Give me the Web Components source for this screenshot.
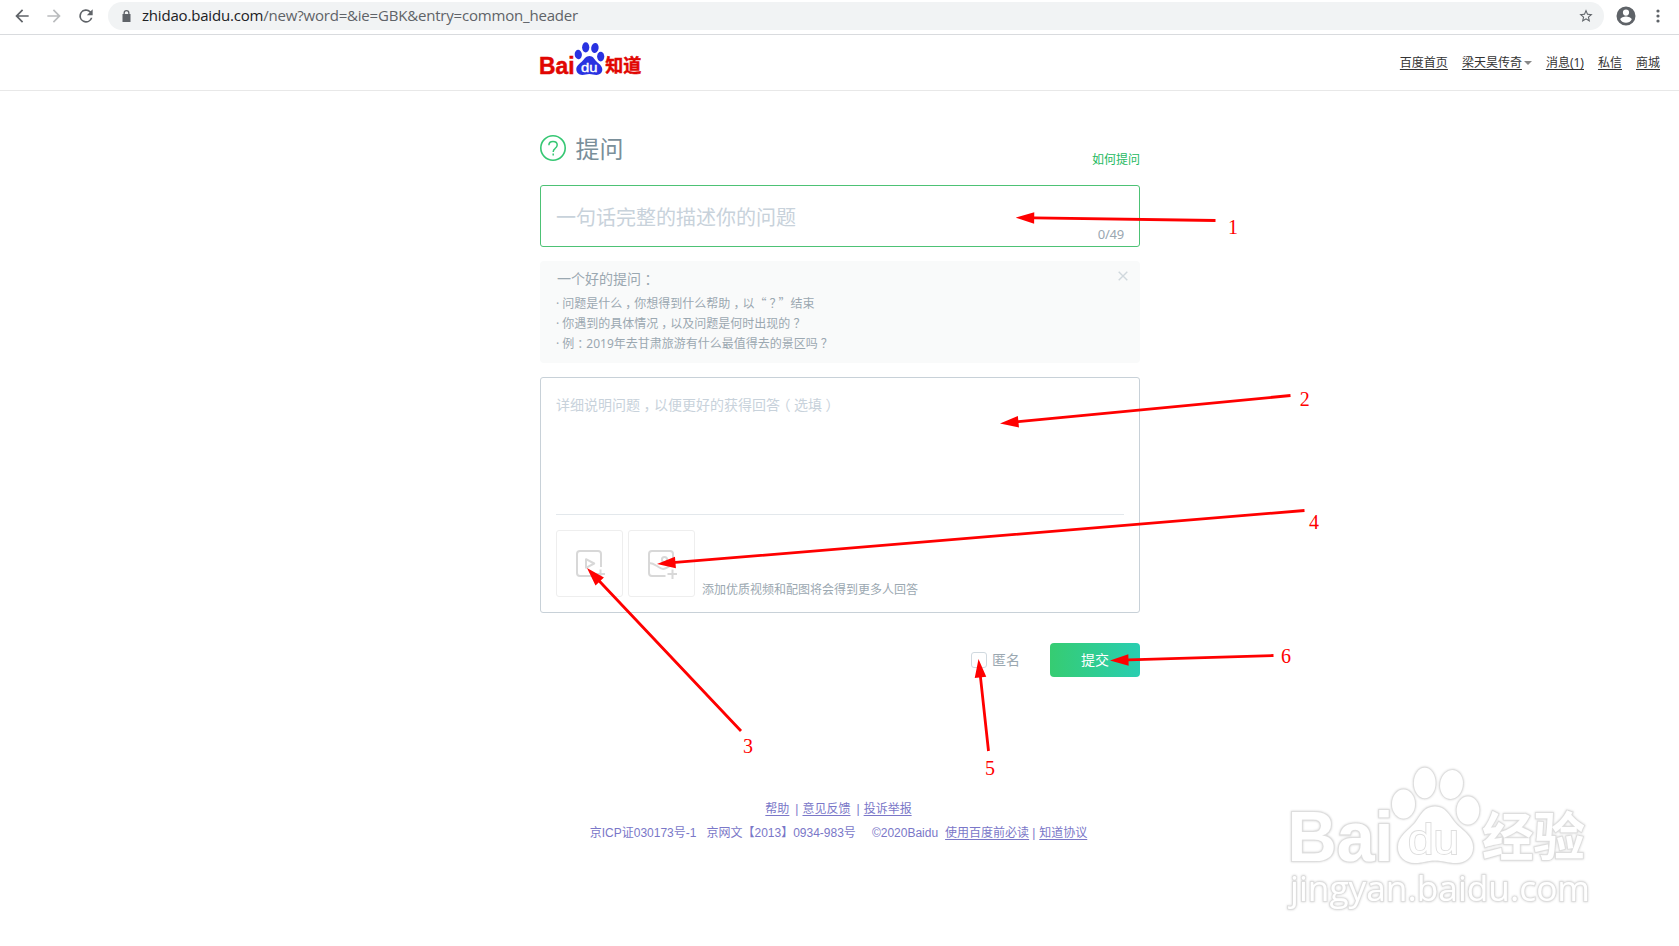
<!DOCTYPE html>
<html lang="zh-CN">
<head>
<meta charset="utf-8">
<title>提问_百度知道</title>
<style>
  html, body {
    margin: 0;
    height: 946px;
    overflow: hidden;
    background: #fff;
  }
  body {
    position: relative;
    font-family: "Noto Sans", "Noto Sans CJK SC", sans-serif;
    font-size: 12px;
    color: #333;
    text-spacing-trim: space-all;
  }
  /* punctuation centred in its full-width cell */
  i {
    margin: 0 .25em;
    font-family: "Noto Sans CJK SC", sans-serif;
    font-style: normal;
    font-feature-settings: "halt";
    line-height: 0;
  }
  q {
    quotes: none;
    font-family: "Noto Sans CJK SC", sans-serif;
    line-height: 0;
  }
</style>
</head>
<body>
<browser-bar host="zhidao.baidu.com" path="/new?word=&amp;ie=GBK&amp;entry=common_header"></browser-bar>
<site-header>
  <nav-link>百度首页</nav-link>
  <nav-link menu>梁天昊传奇</nav-link>
  <nav-link>消息(1)</nav-link>
  <nav-link>私信</nav-link>
  <nav-link>商城</nav-link>
</site-header>
<ask-page>
  <ask-title><span>提问</span><span slot="help">如何提问</span></ask-title>
  <title-input count="0/49">一句话完整的描述你的问题</title-input>
  <tips-panel>
    <span slot="title">一个好的提问<i>：</i></span>
    <div>· 问题是什么<i>，</i>你想得到什么帮助<i>，</i>以<q>“<i>？</i>”</q>结束</div>
    <div>· 你遇到的具体情况<i>，</i>以及问题是何时出现的<i>？</i></div>
    <div>· 例<i>：</i>2019年去甘肃旅游有什么最值得去的景区吗<i>？</i></div>
  </tips-panel>
  <detail-editor>
    <span>详细说明问题<i>，</i>以便更好的获得回答<i>（</i>选填<i>）</i></span>
    <upload-tile slot="tiles" type="video"></upload-tile>
    <upload-tile slot="tiles" type="image"></upload-tile>
    <span slot="hint">添加优质视频和配图将会得到更多人回答</span>
  </detail-editor>
  <submit-row><span slot="anonymous">匿名</span>提交</submit-row>
</ask-page>
<site-footer></site-footer>
<jingyan-watermark></jingyan-watermark>
<arrow-overlay></arrow-overlay>

<script>
class BaseElement extends HTMLElement {
  constructor() {
    super();
    this.attachShadow({ mode: 'open' });
  }

  connectedCallback() {
    this.shadowRoot.innerHTML = this.render();
  }
}

class BrowserBar extends BaseElement {
  render() {
    return `
      <style>
        :host {
          display: flex;
          align-items: center;
          box-sizing: border-box;
          height: 35px;
          padding: 0 11px 3px 12px;
          border-bottom: 1px solid #d9dbde;
        }
        svg { display: block; flex: none; }
        .nav { display: flex; gap: 12px; width: 96px; }
        .url {
          flex: 1;
          display: flex;
          align-items: center;
          box-sizing: border-box;
          height: 28px;
          margin-top: 1px;
          padding: 0 10px 0 12px;
          border-radius: 14px;
          background: #f1f3f4;
          font: 15px/26px "Open Sans", sans-serif;
          color: #5f6368;
        }
        .text { flex: 1; height: 28px; margin-left: 9px; letter-spacing: -0.19px; white-space: nowrap; }
        .host { color: #202124; }
        .tools { display: flex; align-items: center; gap: 10px; margin-left: 10px; }
      </style>
      <div class="nav">
        <svg width="20" height="20" viewBox="0 0 24 24" fill="#5f6368"><path d="M20 11H7.8l5.6-5.6L12 4l-8 8 8 8 1.4-1.4L7.8 13H20z"/></svg>
        <svg width="20" height="20" viewBox="0 0 24 24" fill="#babcbe"><path d="M12 4l-1.4 1.4 5.6 5.6H4v2h12.200l-5.600 5.600L12 20l8-8z"/></svg>
        <svg width="20" height="20" viewBox="0 0 24 24" fill="#5f6368"><path d="M17.650 6.350A8 8 0 1 0 19.730 14h-2.080A6 6 0 1 1 12 6c1.660 0 3.140.690 4.220 1.780L13 11h7V4z"/></svg>
      </div>
      <div class="url">
        <svg width="13" height="14" viewBox="0 0 13 14" fill="#5f6368"><path d="M2.500 5h1V4a3 3 0 0 1 6 0v1h1v8h-8zM4.800 5h3.400V4a1.700 1.700 0 0 0-3.400 0z" fill-rule="evenodd"/></svg>
        <span class="text"><span class="host">${this.getAttribute('host')}</span>${this.getAttribute('path')}</span>
        <svg width="16" height="16" viewBox="0 0 24 24" fill="#5f6368"><path d="M22 9.240l-7.190-.620L12 2 9.190 8.630 2 9.240l5.460 4.730L5.820 21 12 17.270 18.180 21l-1.630-7.030zM12 15.400l-3.760 2.270 1-4.280-3.320-2.880 4.380-.380L12 6.100l1.710 4.040 4.380.380-3.320 2.880 1 4.280z"/></svg>
      </div>
      <div class="tools">
        <svg width="24" height="24" viewBox="0 0 24 24" fill="#5f6368"><path d="M12 2.500a9.500 9.500 0 1 0 0 19 9.500 9.500 0 0 0 0-19zm0 3a3.100 3.100 0 1 1 0 6.200 3.100 3.100 0 0 1 0-6.200zm0 13.300a6.600 6.600 0 0 1-5.700-3.200c0-1.900 3.800-3 5.700-3s5.700 1.100 5.700 3a6.600 6.600 0 0 1-5.700 3.200z"/></svg>
        <svg width="20" height="20" viewBox="0 0 20 20" fill="#5f6368"><circle cx="10" cy="5" r="1.600"/><circle cx="10" cy="10" r="1.600"/><circle cx="10" cy="15" r="1.600"/></svg>
      </div>
    `;
  }
}

class SiteHeader extends BaseElement {
  render() {
    return `
      <style>
        :host {
          display: flex;
          justify-content: flex-end;
          box-sizing: border-box;
          height: 56px;
          border-bottom: 1px solid #e8e8e8;
        }
        .logo { width: 104px; height: 42px; margin: 6px auto 0 539px; }
        nav { display: flex; align-items: center; gap: 14px; padding: 1px 19px 0 0; }
      </style>
      <zhidao-logo class="logo"></zhidao-logo>
      <nav><slot></slot></nav>
    `;
  }
}

class ZhidaoLogo extends BaseElement {
  render() {
    return `
      <style>
        :host { display: block; }
        svg { display: block; }
        .red { fill: #e10602; stroke: #e10602; stroke-width: .5; font-weight: 700; }
      </style>
      <svg width="104" height="42" viewBox="539 41 104 42">
        <text class="red" x="539" y="73.600" font-family="Liberation Sans, sans-serif" font-size="23.500" textLength="35.500" lengthAdjust="spacingAndGlyphs">Bai</text>
        <g fill="#2932e1">
          <ellipse cx="578.300" cy="54.500" rx="3.600" ry="4.700" transform="rotate(-6 578.300 54.500)"/>
          <ellipse cx="585.700" cy="47.300" rx="3.600" ry="5.100"/>
          <ellipse cx="594.900" cy="48" rx="3.700" ry="5" transform="rotate(10 594.900 48)"/>
          <ellipse cx="600.700" cy="56.600" rx="3.600" ry="4.800"/>
          <path d="M589.500 56c3.500 0 4.800 3.200 6.800 5.200 2.400 2.400 6 4.500 6 8.300 0 3.500-2.700 5.400-5.800 5.400-2.700 0-4.500-.800-7.200-.800s-4.300.800-7 .800c-3.500 0-6-2.200-6-5.600 0-3.700 3.800-5.700 6.100-8.200 1.900-2 3.500-5.100 7.100-5.100z"/>
        </g>
        <text x="581" y="71.600" fill="#fff" font-family="Liberation Sans, sans-serif" font-size="13.500" textLength="16.500" lengthAdjust="spacingAndGlyphs" stroke="#fff" stroke-width=".4">du</text>
        <text class="red" x="605.300" y="72.300" font-family="Noto Sans CJK SC, sans-serif" font-size="18" textLength="36" lengthAdjust="spacingAndGlyphs">知道</text>
      </svg>
    `;
  }
}

class NavLink extends BaseElement {
  render() {
    return `
      <style>
        :host { display: flex; align-items: center; font-size: 12px; line-height: 18px; color: #333; white-space: nowrap; }
        a { text-decoration: underline; text-underline-offset: 2px; }
        b { margin: -1px 0 0 2px; border: 4px solid transparent; border-top-color: #888; border-bottom: 0; }
      </style>
      <a><slot></slot></a>${this.hasAttribute('menu') ? '<b></b>' : ''}
    `;
  }
}

class AskPage extends BaseElement {
  render() {
    return `
      <style>
        :host { display: flex; flex-direction: column; width: 600px; margin: 44px 0 0 540px; }
      </style>
      <slot></slot>
    `;
  }
}

class AskTitle extends BaseElement {
  render() {
    return `
      <style>
        :host {
          display: flex;
          height: 50px;
          font-size: 24px;
          line-height: 28px;
          color: #7a8f9a;
        }
        svg { margin: 0 9.500px 0 0; }
        .help { margin: 16px 0 0 auto; font-size: 12px; line-height: 18px; color: #24b95f; }
      </style>
      <svg width="26" height="26" viewBox="0 0 26 26" fill="none" stroke="#36c773">
        <circle cx="13" cy="13" r="12.200" stroke-width="1.600"/>
        <path d="M8.900 10.300c0-2.300 1.700-3.700 4.100-3.700s4.200 1.300 4.200 3.500c0 1.700-1 2.500-2.200 3.500-1.300 1-1.800 1.600-1.800 3.400M13.200 18.400v2" stroke-width="1.500"/>
      </svg>
      <slot></slot>
      <div class="help"><slot name="help"></slot></div>
    `;
  }
}

class TitleInput extends BaseElement {
  render() {
    return `
      <style>
        :host {
          display: flex;
          justify-content: space-between;
          box-sizing: border-box;
          height: 62px;
          padding: 0 15px;
          border: 1px solid #4dc275;
          border-radius: 3px;
          font-size: 20px;
          line-height: 64px;
          color: #c8d2db;
        }
        .count { align-self: flex-end; font-size: 13px; line-height: 24px; color: #9aa7b1; letter-spacing: -0.2px; }
      </style>
      <slot></slot>
      <span class="count">${this.getAttribute('count')}</span>
    `;
  }
}

class TipsPanel extends BaseElement {
  render() {
    return `
      <style>
        :host {
          display: block;
          box-sizing: border-box;
          height: 102px;
          margin-top: 14px;
          padding: 8px 12px 0 16px;
          border-radius: 4px;
          background: #f9fafa;
          line-height: 20px;
          color: #9ba8b1;
        }
        header { display: flex; justify-content: space-between; height: 25px; padding-left: 1px; font-size: 14px; line-height: 20px; }
        svg { margin-top: 2px; }
      </style>
      <header>
        <slot name="title"></slot>
        <svg width="10" height="10" viewBox="0 0 10 10" stroke="#d0d8dd" stroke-width="1.400"><path d="M.7.700l8.600 8.600M9.300.700L.7 9.300"/></svg>
      </header>
      <slot></slot>
    `;
  }
}

class DetailEditor extends BaseElement {
  render() {
    return `
      <style>
        :host {
          display: flex;
          flex-direction: column;
          box-sizing: border-box;
          height: 236px;
          margin-top: 14px;
          padding: 17px 15px 15px;
          border: 1px solid #c8d1d8;
          border-radius: 3px;
        }
        .text { flex: 1; font-size: 14px; line-height: 20px; color: #c8d2db; }
        .media {
          display: flex;
          align-items: flex-end;
          gap: 5px;
          padding-top: 15px;
          border-top: 1px solid #e3e8ec;
        }
        .hint { margin-left: 2px; line-height: 14px; color: #9ba8b1; }
      </style>
      <div class="text"><slot></slot></div>
      <div class="media">
        <slot name="tiles"></slot>
        <div class="hint"><slot name="hint"></slot></div>
      </div>
    `;
  }
}

class UploadTile extends BaseElement {
  render() {
    const inner = this.getAttribute('type') === 'video'
      ? '<path d="M10 9.200v8.600l8.200-4.300z" stroke-linejoin="round"/>'
      : '<path d="M1 13c3 0 5 1 8 3 2 1.300 4 3 6 3 3 0 5-2 10-5"/><circle cx="16.500" cy="9.500" r="2.600"/>';

    return `
      <style>
        :host {
          display: flex;
          box-sizing: border-box;
          width: 67px;
          height: 67px;
          padding: 19px 0 0 19px;
          border: 1px solid #eee;
          border-radius: 3px;
        }
        svg { flex: none; }
      </style>
      <svg width="30" height="30" viewBox="0 0 30 30" fill="none" stroke="#d8d8d8" stroke-width="2">
        <path d="M25 17V4a3 3 0 0 0-3-3H4a3 3 0 0 0-3 3v19a3 3 0 0 0 3 3h13.500"/>
        ${inner}
        <path d="M24.500 19.500v9.500M19.500 24h9.500"/>
      </svg>
    `;
  }
}

class SubmitRow extends BaseElement {
  render() {
    return `
      <style>
        :host {
          display: flex;
          justify-content: flex-end;
          align-items: center;
          height: 34px;
          margin-top: 30px;
          font-size: 14px;
        }
        .box { box-sizing: border-box; width: 16px; height: 16px; margin-right: 5px; border: 1px solid #d0d9df; border-radius: 3px; }
        .label { height: 34px; margin-right: 30px; line-height: 33px; color: #9ba8b1; }
        .submit {
          width: 90px;
          border-radius: 4px;
          background: linear-gradient(90deg, #36cc72, #29ceb1);
          color: #fff;
          line-height: 34px;
          text-align: center;
        }
      </style>
      <span class="box"></span>
      <span class="label"><slot name="anonymous"></slot></span>
      <div class="submit"><slot></slot></div>
    `;
  }
}

class SiteFooter extends BaseElement {
  render() {
    return `
      <style>
        :host {
          display: flex;
          flex-direction: column;
          align-items: center;
          margin-top: 120px;
          padding-right: 2px;
          font: 12px/24px "Liberation Sans", "Noto Sans CJK SC", sans-serif;
          color: #7a77c8;
          white-space: nowrap;
        }
        .row { display: flex; height: 24px; }
        a { text-decoration: underline; text-underline-offset: 2px; }
        .row:first-child { padding-left: 8px; }
        .bar { margin: 0 4px 0 6px; }
        .tight { margin: 0 4px 0 3px; }
      </style>
      <div class="row">
        <a>帮助</a><span class="bar">|</span><a>意见反馈</a><span class="bar">|</span><a>投诉举报</a>
      </div>
      <div class="row">
        <span style="margin-right:10px">京ICP证030173号-1</span>
        <span style="margin-right:16px">京网文【2013】0934-983号</span>
        <span style="margin-right:7px">©2020Baidu</span>
        <a>使用百度前必读</a><span class="tight">|</span><a>知道协议</a>
      </div>
    `;
  }
}

class JingyanWatermark extends BaseElement {
  render() {
    return `
      <style>
        :host { position: absolute; left: 1280px; top: 760px; }
        svg { display: block; }
        text, ellipse, path { fill: #fff; stroke: #dedede; stroke-width: 1.800; paint-order: stroke; }
        .bold { stroke-width: 2.200; }
        .soft { filter: drop-shadow(0 0 1px #d0d0d0); }
      </style>
      <svg width="320" height="160" viewBox="1280 760 320 160">
        <g class="soft">
          <text class="bold" x="1287.500" y="860.500" font-family="Liberation Sans, sans-serif" font-size="70" font-weight="700" textLength="106" lengthAdjust="spacingAndGlyphs">Bai</text>
          <ellipse cx="1403.500" cy="804" rx="11.500" ry="14.500"/>
          <ellipse cx="1424.700" cy="783" rx="10.800" ry="15.300"/>
          <ellipse cx="1451.500" cy="784.500" rx="11.300" ry="14.500" transform="rotate(9 1451.500 784.500)"/>
          <ellipse cx="1468" cy="810.500" rx="11.300" ry="14"/>
          <path d="M1435 806.500c11 0 14 9 20 16 7 8 18 13 18 25 0 10-8 15.500-17 15.500-8 0-13-2.500-21-2.500s-12 2.500-20 2.500c-10 0-17-6.500-17-16 0-11 11-17 17-24 6-8 9-16.500 20-16.500z"/>
          <text x="1408" y="853.500" font-family="Liberation Sans, sans-serif" font-size="42" textLength="51" lengthAdjust="spacingAndGlyphs">du</text>
          <text x="1482" y="855.500" font-family="Noto Sans CJK SC, sans-serif" font-size="52" font-weight="700" textLength="103" lengthAdjust="spacingAndGlyphs">经验</text>
          <text x="1290" y="900.500" font-family="Open Sans, sans-serif" font-size="35" textLength="300" lengthAdjust="spacingAndGlyphs">jingyan.baidu.com</text>
        </g>
      </svg>
    `;
  }
}

class ArrowOverlay extends BaseElement {
  render() {
    // tip x/y, tail x/y, number x/y
    const arrows = [
      [1015.7, 217.7, 1215.5, 220.5, 1233, 234],
      [1000, 423.5, 1290.500, 395.500, 1304.700, 406],
      [587, 568, 741, 731, 748, 753],
      [657, 564, 1304.500, 510.500, 1314, 529],
      [978.5, 659, 988.5, 751, 990, 775],
      [1110, 660.500, 1273.500, 655.500, 1286, 662.5],
    ];

    const shapes = arrows.map(([x, y, tx, ty, nx, ny], index) => {
      const angle = Math.atan2(ty - y, tx - x) * 180 / Math.PI;
      const length = Math.hypot(tx - x, ty - y);
      return `
        <g transform="translate(${x} ${y}) rotate(${angle})">
          <path d="M0 0L18.500-5.800V-1.400H${length}V1.400H18.500V5.800z"/>
        </g>
        <text x="${nx}" y="${ny}">${index + 1}</text>
      `;
    }).join('');

    return `
      <style>
        :host { position: absolute; left: 0; top: 0; pointer-events: none; }
        svg { display: block; }
        text { font: 20px "Liberation Serif", serif; text-anchor: middle; }
      </style>
      <svg width="1679" height="946" fill="#f00">${shapes}</svg>
    `;
  }
}

customElements.define('browser-bar', BrowserBar);
customElements.define('zhidao-logo', ZhidaoLogo);
customElements.define('nav-link', NavLink);
customElements.define('site-header', SiteHeader);
customElements.define('ask-page', AskPage);
customElements.define('ask-title', AskTitle);
customElements.define('title-input', TitleInput);
customElements.define('tips-panel', TipsPanel);
customElements.define('upload-tile', UploadTile);
customElements.define('detail-editor', DetailEditor);
customElements.define('submit-row', SubmitRow);
customElements.define('site-footer', SiteFooter);
customElements.define('jingyan-watermark', JingyanWatermark);
customElements.define('arrow-overlay', ArrowOverlay);
</script>
</body>
</html>
